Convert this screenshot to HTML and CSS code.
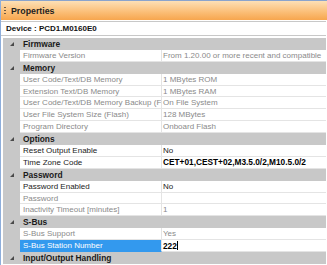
FILE: index.html
```html
<!DOCTYPE html>
<html>
<head>
<meta charset="utf-8">
<link rel="stylesheet" href="styles.css">
</head>
<body>
<div class="panel">
  <div class="titlebar">
    <span class="grip"></span>
    <span class="title">Properties</span>
  </div>
  <div class="device">Device : PCD1.M0160E0</div>
  <div class="grid">
    <div class="cat"><span class="tri"></span><span class="cat-name">Firmware</span></div>
    <div class="row ro"><span class="margin"></span><span class="name">Firmware Version</span><span class="value">From 1.20.00 or more recent and compatible</span></div>

    <div class="cat"><span class="tri"></span><span class="cat-name">Memory</span></div>
    <div class="row ro"><span class="margin"></span><span class="name">User Code/Text/DB Memory</span><span class="value">1 MBytes ROM</span></div>
    <div class="row ro"><span class="margin"></span><span class="name">Extension Text/DB Memory</span><span class="value">1 MBytes RAM</span></div>
    <div class="row ro"><span class="margin"></span><span class="name">User Code/Text/DB Memory Backup (Flash)</span><span class="value">On File System</span></div>
    <div class="row ro"><span class="margin"></span><span class="name">User File System Size (Flash)</span><span class="value">128 MBytes</span></div>
    <div class="row ro"><span class="margin"></span><span class="name">Program Directory</span><span class="value">Onboard Flash</span></div>

    <div class="cat"><span class="tri"></span><span class="cat-name">Options</span></div>
    <div class="row"><span class="margin"></span><span class="name">Reset Output Enable</span><span class="value">No</span></div>
    <div class="row"><span class="margin"></span><span class="name">Time Zone Code</span><span class="value strong">CET+01,CEST+02,M3.5.0/2,M10.5.0/2</span></div>

    <div class="cat"><span class="tri"></span><span class="cat-name">Password</span></div>
    <div class="row"><span class="margin"></span><span class="name">Password Enabled</span><span class="value">No</span></div>
    <div class="row ro"><span class="margin"></span><span class="name">Password</span><span class="value"></span></div>
    <div class="row ro"><span class="margin"></span><span class="name">Inactivity Timeout [minutes]</span><span class="value">1</span></div>

    <div class="cat"><span class="tri"></span><span class="cat-name">S-Bus</span></div>
    <div class="row ro"><span class="margin"></span><span class="name">S-Bus Support</span><span class="value">Yes</span></div>
    <div class="row selected"><span class="margin"></span><span class="name">S-Bus Station Number</span><span class="value strong editing">222<span class="caret"></span></span></div>

    <div class="cat"><span class="tri"></span><span class="cat-name">Input/Output Handling</span></div>
  </div>
</div>
</body>
</html>
```

FILE: styles.css
```css
* { box-sizing: border-box; }
html, body { margin: 0; padding: 0; background: #ffffff; }
body { font-family: "Liberation Sans", Arial, sans-serif; font-size: 8px; color: #1a1a1a; }

.panel {
  width: 327px;
  height: 265px;
  overflow: hidden;
  border-left: 1px solid #8eaedb;
  background: #ffffff;
}

.titlebar {
  height: 20px;
  border-top: 1px solid #8aa4cc;
  background: linear-gradient(#fde0b6, #fbc07a 55%, #f7a64e);
  display: flex;
  align-items: center;
  padding-left: 3px;
  gap: 5px;
}
.grip {
  width: 2px;
  height: 10px;
  background-image: radial-gradient(circle, #6b5a44 0.8px, transparent 1px);
  background-size: 2px 3px;
}
.title { font-weight: bold; font-size: 8.8px; color: #1e1e1e; }

.device {
  height: 15px;
  margin-top: 1px;
  margin-right: 1px;
  border-top: 1px solid #c8c8c8;
  border-bottom: 1px solid #c8c8c8;
  display: flex;
  align-items: center;
  padding-left: 5px;
  font-weight: bold;
  font-size: 8px;
  color: #111;
}

.grid {
  margin-top: 2px;
  margin-left: 2px;
  margin-right: 1px;
  display: flex;
  flex-direction: column;
}

.cat {
  height: 11.9px;
  background: #c8c8c8;
  display: flex;
  align-items: center;
  font-weight: bold;
  font-size: 8.4px;
  color: #1a1a1a;
}
.tri {
  width: 17px;
  display: flex;
  justify-content: center;
}
.tri::before {
  content: "";
  width: 0; height: 0;
  border-left: 4px solid transparent;
  border-bottom: 4px solid #4a4a4a;
}
.cat-name { padding-left: 3px; }

.row {
  height: 11.9px;
  display: grid;
  grid-template-columns: 17px 142px 1fr;
}
.margin { background: #c8c8c8; }
.name, .value {
  display: flex;
  align-items: center;
  white-space: nowrap;
  overflow: hidden;
  border-bottom: 1px solid #e4e4e4;
  color: #222;
}
.name { padding-left: 3px; border-right: 1px solid #e4e4e4; }
.value { padding-left: 1px; }
.ro .name, .ro .value { color: #8a8a8a; }
.strong { font-weight: bold; font-size: 8.3px; color: #000; }

.selected .name { background: #3399ee; color: #ffffff; border-bottom-color: #3399ee; }
.editing { color: #000; }
.caret { display: inline-block; width: 1px; height: 9px; background: #000; }
```
